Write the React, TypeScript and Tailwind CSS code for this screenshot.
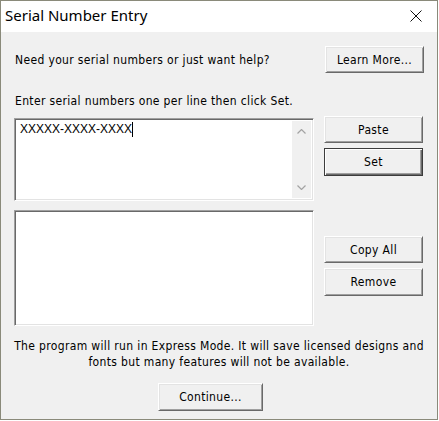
import { FC } from "react";

const ui = { fontFamily: '"DejaVu Sans Condensed", "DejaVu Sans", Tahoma, sans-serif' };

const Btn: FC<{ label: string; def?: boolean; className?: string }> = ({ label, def, className = "" }) => {
  const edge = def
    ? "border border-[#3c3c3c] shadow-[inset_1px_1px_0_#ffffff,inset_-1px_-1px_0_#696969,inset_-2px_-2px_0_#a0a0a0]"
    : "border border-t-white border-l-white border-b-[#696969] border-r-[#696969] shadow-[inset_1px_1px_0_#e3e3e3,inset_-1px_-1px_0_#a0a0a0]";
  return (
    <div className={`flex items-center justify-center bg-[#f0f0f0] text-[12px] tracking-[0.35px] text-black ${edge} ${className}`}>
      <span>{label}</span>
    </div>
  );
};

const Sunken: FC<{ className?: string; children?: React.ReactNode }> = ({ className = "", children }) => (
  <div className={`bg-white border border-t-[#a0a0a0] border-l-[#a0a0a0] border-b-white border-r-white shadow-[inset_1px_1px_0_#696969,inset_-1px_-1px_0_#e3e3e3] ${className}`}>
    {children}
  </div>
);

const App: FC = () => {
  return (
    <div className="w-[439px] h-[421px] bg-white">
      <div className="w-[438px] h-[420px] border border-[#8a8a7a] flex flex-col">
        <div className="h-[31px] bg-white flex items-center justify-between pl-[4px] pr-[15px]">
          <span className="text-[15px] text-black leading-none pb-[2px]" style={{ fontFamily: '"Noto Sans", "Open Sans", sans-serif' }}>
            Serial Number Entry
          </span>
          <svg width="12" height="12" viewBox="0 0 12 12" className="mb-[1px]">
            <path d="M0.5 0.5 L11.5 11.5 M11.5 0.5 L0.5 11.5" stroke="#111" strokeWidth="1" />
          </svg>
        </div>
        <div className="flex-1 bg-[#f0f0f0] pl-[13px] pr-[13px] text-black" style={ui}>
          <div className="mt-[14px] flex items-center justify-between">
            <span className="text-[12px] tracking-[0.35px] pl-px">Need your serial numbers or just want help?</span>
            <Btn label="Learn More..." className="w-[99px] h-[27px]" />
          </div>
          <div className="mt-[21px] text-[12px] tracking-[0.35px] leading-[15px] pl-px">Enter serial numbers one per line then click Set.</div>
          <div className="mt-[7px] flex">
            <div className="w-[300px] flex flex-col">
              <Sunken className="mt-[2px] h-[83px] flex">
                <div className="flex-1 pl-[5px] pt-[3px] flex items-start">
                  <span className="text-[12px] leading-[14px]" style={{ fontFamily: '"Liberation Sans", Arial, sans-serif' }}>
                    XXXXX-XXXX-XXXX
                  </span>
                  <span className="w-px h-[15px] bg-black" />
                </div>
                <div className="w-[19px] my-[2px] mr-[2px] bg-[#f0f0f0] flex flex-col items-center justify-between py-[8px]">
                  <svg width="9" height="5" viewBox="0 0 9 5">
                    <path d="M0.5 4.5 L4.5 0.5 L8.5 4.5" fill="none" stroke="#a3a3a3" strokeWidth="1.2" />
                  </svg>
                  <svg width="9" height="5" viewBox="0 0 9 5">
                    <path d="M0.5 0.5 L4.5 4.5 L8.5 0.5" fill="none" stroke="#a3a3a3" strokeWidth="1.2" />
                  </svg>
                </div>
              </Sunken>
              <Sunken className="mt-[9px] h-[116px]" />
            </div>
            <div className="ml-[10px] w-[99px] flex flex-col">
              <Btn label="Paste" className="h-[27px]" />
              <Btn label="Set" def className="mt-[5px] h-[28px]" />
              <Btn label="Copy All" className="mt-[60px] h-[27px]" />
              <Btn label="Remove" className="mt-[5px] h-[28px]" />
            </div>
          </div>
          <div className="mt-[12px] text-center text-[12px] tracking-[0.35px] leading-[16px]">
            The program will run in Express Mode. It will save licensed designs and
            <br />
            fonts but many features will not be available.
          </div>
          <div className="mt-[13px] flex justify-center">
            <Btn label="Continue..." className="w-[105px] h-[28px] mr-[17px]" />
          </div>
        </div>
      </div>
    </div>
  );
};

export default App;
